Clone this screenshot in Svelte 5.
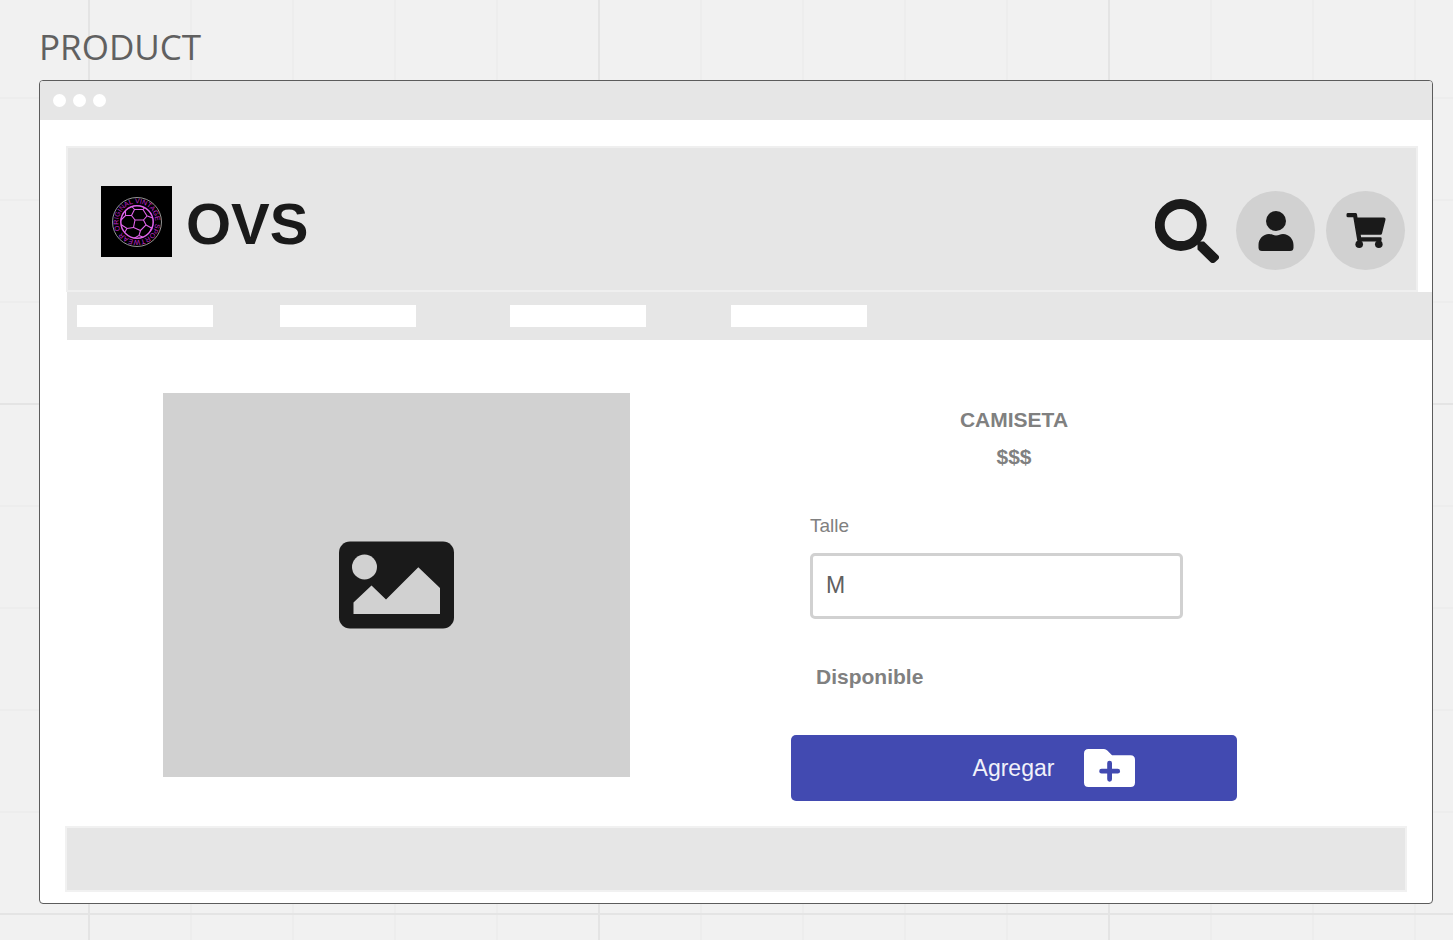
<script>
  let size = $state('M');
  const sections = ['Sección 1', 'Sección 2', 'Sección 3', 'Sección 4'];
</script>

<main class="board">
  <h1 class="board-title">PRODUCT</h1>

  <div class="window">
    <div class="titlebar"><span></span><span></span><span></span></div>

    <header class="header">
      <a class="brand" href="#home">
        <svg class="logo" viewBox="0 0 71 71" aria-hidden="true">
          <defs>
            <path id="ring" d="M19.400 43.900A18.400 18.400 0 1 1 19.500 44.100" />
            <clipPath id="ball"><circle cx="36" cy="36" r="16.5" /></clipPath>
          </defs>
          <rect width="71" height="71" fill="#000" />
          <circle cx="36" cy="36" r="24.5" fill="none" stroke="#b9b9b9" stroke-width="0.8" />
          <text class="ring-text"><textPath href="#ring">ORIGINAL VINTAGE SPORTWEAR</textPath></text>
          <g fill="none" stroke="#df62e8" stroke-width="1.1">
            <circle cx="36" cy="36" r="16.2" stroke-width="1.5" />
            <g clip-path="url(#ball)">
              <path d="M34 34h8.500l2.500 5-5.500 5.500-7-3Z" />
              <path d="M34 34l-3.500-4.500 3-6h8.500l4 6.500-3.500 4M30.500 29.500h-6l-5 5M33.500 23.500l-3-3.500M42 23.500l3-3.500 5 6M46.500 30l5 2M32.500 41.500l-6.500 1-6-4M26 42.500l-2.500 4M45 39l5.500 3 3-4M50.500 42l-2 5M39.500 44.500l-1.500 5-6 3.500M38 49.500l6 2.500M30.500 20l-6 4v5.500M45 20l-8.500-1-6 1" />
            </g>
          </g>
        </svg>
        <span>OVS</span>
      </a>

      <div class="actions">
        <button class="search" aria-label="Buscar">
          <svg viewBox="0 0 64 64" width="64" height="64">
            <circle cx="25.800" cy="26" r="21" fill="none" stroke="#1a1a1a" stroke-width="9.800" />
            <path d="M42.500 46.500Q41 42 46 42.500L49 42.500 63.300 56.500Q65 58.500 63 60.500L60 63.300Q57.500 65 55.300 63L42.500 50.500Z" fill="#1a1a1a" />
          </svg>
        </button>
        <button class="round" aria-label="Cuenta">
          <svg viewBox="0 0 36 40" width="36" height="40" fill="#1a1a1a">
            <circle cx="18" cy="10" r="10" />
            <path d="M11 23C14 23 15 24.400 18 24.400S22 23 25 23C31 23 35.500 28 35.500 34V36.500Q35.500 40 32 40H4Q.5 40 .5 36.500V34C.5 28 5 23 11 23Z" />
          </svg>
        </button>
        <button class="round" aria-label="Carrito">
          <svg viewBox="0 0 40 36" width="40" height="36" fill="#1a1a1a">
            <path d="M2 0H9.500Q10.700 0 11 1.200L11.500 4.500H38Q40 4.800 39.500 6.800L36 20.500Q35.700 21.700 34.500 21.700H14.700L15.100 24.300H34.700Q36 24.500 35.700 26L35.200 28.500H12.700Q11.500 28.500 11.200 27.200L7.300 4.300H2Q.5 4.300 .5 2.900V1.400Q.5 0 2 0Z" />
            <circle cx="13.200" cy="31.200" r="3.800" />
            <circle cx="32.800" cy="31.200" r="3.800" />
          </svg>
        </button>
      </div>
    </header>

    <nav class="nav">
      {#each sections as section}
        <a href="#section" aria-label={section}></a>
      {/each}
    </nav>

    <section class="product">
      <div class="photo">
        <svg viewBox="0 0 116 88" width="116" height="88" aria-hidden="true">
          <rect width="115" height="87" x="0" y=".5" rx="11" fill="#1a1a1a" />
          <circle cx="25.500" cy="26" r="12.500" fill="#d1d1d1" />
          <path d="M14.500 73V61.500L32.500 44.500 47 58.500 79.300 26.300 101 47V73Z" fill="#d1d1d1" />
        </svg>
      </div>

      <form class="details" onsubmit={(e) => e.preventDefault()}>
        <h2>CAMISETA</h2>
        <p class="price">$$$</p>
        <div class="field">
          <label for="size">Talle</label>
          <input id="size" type="text" bind:value={size} />
        </div>
        <p class="stock">Disponible</p>
        <button class="add">
          <span>Agregar</span>
          <svg viewBox="0 0 51 38" width="51" height="38" aria-hidden="true">
            <path d="M4.500 0H20Q22 0 23.300 1.500L28 6.300H46.500Q51 6.300 51 10.800V33.500Q51 38 46.500 38H4.500Q0 38 0 33.500V4.500Q0 0 4.500 0Z" fill="#fff" />
            <path d="M17.600 22.200H33.700M25.600 14.100V30.300" fill="none" stroke="#424ab1" stroke-width="4.800" stroke-linecap="round" />
          </svg>
        </button>
      </form>
    </section>

    <footer class="footer"></footer>
  </div>
</main>

<style>
  :global(body) {
    margin: 0;
  }

  .board {
    box-sizing: border-box;
    min-height: 100vh;
    padding: 23px 20px 36px 39px;
    font-family: "Liberation Sans", Arial, sans-serif;
    background-color: #f1f1f1;
    background-image:
      linear-gradient(90deg, #e4e4e4 2px, transparent 2px),
      linear-gradient(#e4e4e4 2px, transparent 2px),
      linear-gradient(90deg, #ededed 2px, transparent 2px),
      linear-gradient(#ededed 2px, transparent 2px);
    background-size: 510px 510px, 510px 510px, 102px 102px, 102px 102px;
    background-position: 88px 403px, 88px 403px, 88px 403px, 88px 403px;
  }

  .board-title {
    margin: 0 0 9px;
    font: 400 35px/48px "Open Sans", "Noto Sans", sans-serif;
    color: #606060;
  }

  .window {
    overflow: hidden;
    border: 1px solid #5c5c5c;
    border-radius: 4px;
    background: #fff;
  }

  .titlebar {
    display: flex;
    align-items: center;
    gap: 7px;
    height: 39px;
    padding-left: 13px;
    background: #e6e6e6;
  }

  .titlebar span {
    width: 13px;
    height: 13px;
    border-radius: 50%;
    background: #fff;
  }

  .header {
    display: flex;
    align-items: center;
    justify-content: space-between;
    box-sizing: border-box;
    height: 146px;
    margin: 26px 14px 0 26px;
    padding: 0 11px 0 33px;
    border: 2px solid #efefef;
    background: #e6e6e6;
  }

  .brand {
    display: flex;
    align-items: center;
    gap: 14px;
    padding-top: 4px;
    font-size: 58px;
    font-weight: 700;
    line-height: 71px;
    color: #1a1a1a;
    text-decoration: none;
  }

  .brand span {
    padding-top: 4px;
    line-height: 67px;
  }

  .logo {
    width: 71px;
    height: 71px;
  }

  .ring-text {
    font-size: 7px;
    font-weight: 400;
    fill: #c026cc;
  }

  .actions {
    display: flex;
    align-items: center;
    gap: 11px;
    padding-top: 23px;
  }

  button {
    display: flex;
    align-items: center;
    justify-content: center;
    padding: 0;
    border: 0;
    font-family: inherit;
    background: none;
    cursor: pointer;
  }

  .search {
    margin-right: 6px;
  }

  .round {
    width: 79px;
    height: 79px;
    border-radius: 50%;
    background: #d1d1d1;
  }

  .nav {
    display: grid;
    grid-template-columns: 203px 230px 221px 136px;
    align-items: center;
    height: 48px;
    margin-left: 27px;
    padding-left: 10px;
    background: #e6e6e6;
  }

  .nav a {
    width: 136px;
    height: 22px;
    background: #fff;
  }

  .product {
    display: grid;
    grid-template-columns: 467fr 446fr;
    gap: 161px;
    padding: 53px 195px 25px 123px;
  }

  .photo {
    display: flex;
    align-items: center;
    justify-content: center;
    height: 384px;
    background: #d1d1d1;
  }

  .details {
    display: flex;
    flex-direction: column;
    padding-top: 8px;
    color: #808080;
  }

  h2,
  .price,
  .stock {
    margin: 0;
    font-size: 21px;
    font-weight: 700;
    line-height: 37px;
    text-align: center;
  }

  .field {
    display: flex;
    flex-direction: column;
    gap: 15px;
    margin: 39px 54px 0 19px;
  }

  label {
    font-size: 19px;
    line-height: 24px;
  }

  input {
    box-sizing: border-box;
    width: 100%;
    height: 66px;
    padding: 0 13px 2px;
    border: 3px solid #d1d1d1;
    border-radius: 5px;
    font: 23px "Liberation Sans", Arial, sans-serif;
    color: #606060;
    background: #fff;
  }

  .stock {
    margin: 39px 25px 40px;
    text-align: left;
  }

  .add {
    gap: 30px;
    height: 66px;
    padding-left: 80px;
    border-radius: 5px;
    font-size: 23px;
    color: #f1f1fa;
    background: #424ab1;
  }

  .footer {
    box-sizing: border-box;
    height: 66px;
    margin: 0 25px 11px;
    border: 2px solid #f1f1f1;
    background: #e6e6e6;
  }
</style>
